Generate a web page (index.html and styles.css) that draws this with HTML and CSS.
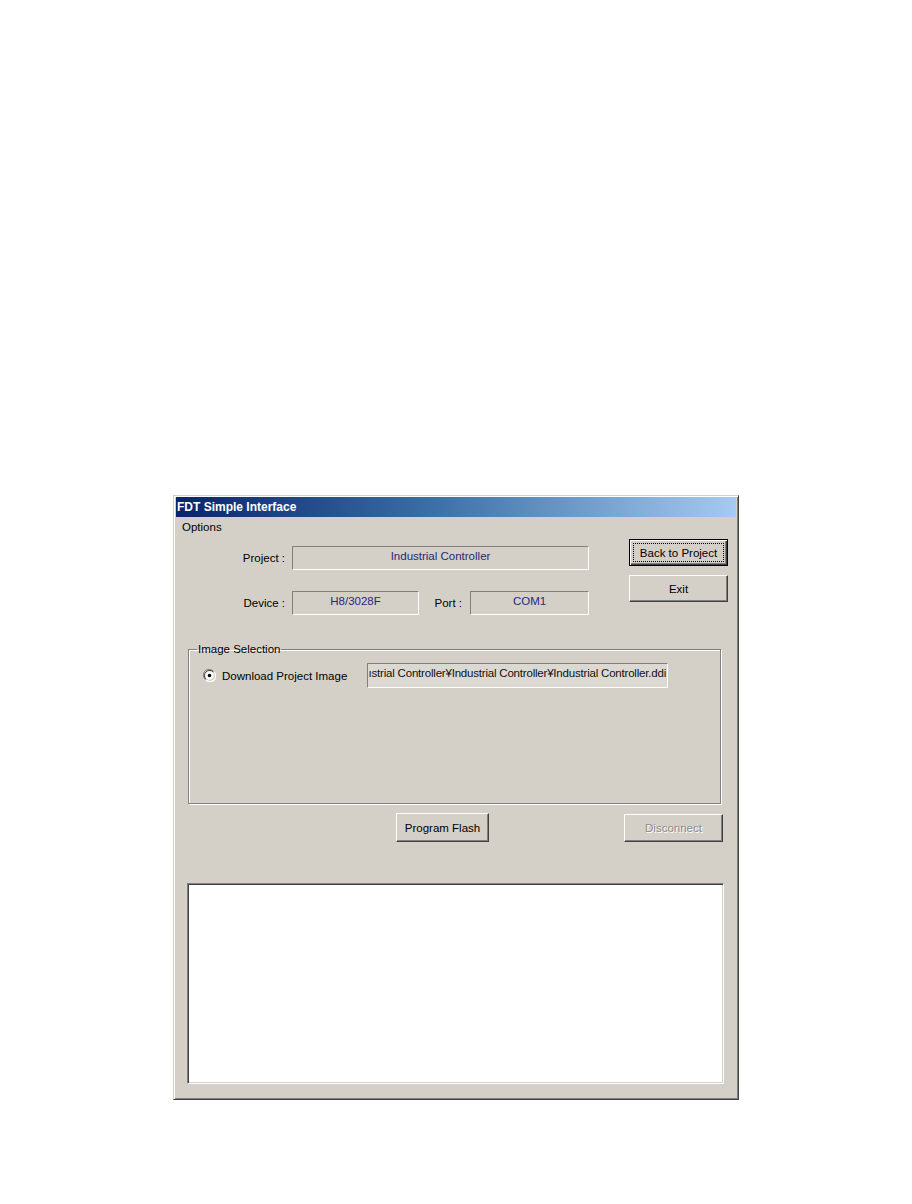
FILE: index.html
```html
<!DOCTYPE html>
<html>
<head>
<meta charset="utf-8">
<title>FDT Simple Interface</title>
<link rel="stylesheet" href="styles.css">
</head>
<body>
<div class="page">
  <div class="window">
    <div class="titlebar">FDT Simple Interface</div>
    <div class="menubar"><span class="menu-item">Options</span></div>
    <div class="client">
      <div class="top">
        <div class="form">
          <div class="label">Project :</div>
          <div class="field wide">Industrial Controller</div>
          <div class="label">Device :</div>
          <div class="field">H8/3028F</div>
          <div class="label port-label">Port :</div>
          <div class="field">COM1</div>
        </div>
        <div class="buttons">
          <button class="btn default"><span class="focus">Back to Project</span></button>
          <button class="btn">Exit</button>
        </div>
      </div>

      <fieldset class="group">
        <legend>Image Selection</legend>
        <div class="group-body">
          <div class="radio-row">
            <svg class="radio" width="13" height="13" viewBox="0 0 13 13">
              <path d="M2 10 A5.5 5.5 0 0 1 10 2" fill="none" stroke="#808080" stroke-width="1"/>
              <path d="M3 10.5 A4.8 4.8 0 0 1 10.5 3" fill="none" stroke="#404040" stroke-width="1"/>
              <path d="M11 3 A5.5 5.5 0 0 1 3 11" fill="none" stroke="#ffffff" stroke-width="1.2"/>
              <circle cx="6.5" cy="6.5" r="4.2" fill="#ffffff"/>
              <circle cx="6.5" cy="6.5" r="1.8" fill="#000000"/>
            </svg>
            <span class="radio-label">Download Project Image</span>
            <div class="path"><span>ıstrial Controller¥Industrial Controller¥Industrial Controller.ddi</span></div>
          </div>
        </div>
      </fieldset>

      <div class="actions">
        <button class="btn flash">Program Flash</button>
        <button class="btn disabled" disabled>Disconnect</button>
      </div>

      <div class="log"></div>
    </div>
  </div>
</div>
</body>
</html>
```
FILE: styles.css
```css
html, body {
  margin: 0;
  padding: 0;
  background: #ffffff;
}

.page {
  padding: 495px 0 0 173px;
}

.window {
  box-sizing: border-box;
  width: 566px;
  height: 605px;
  background: #d4d0c8;
  border: 1px solid;
  border-color: #d4d0c8 #404040 #404040 #d4d0c8;
  box-shadow: inset 1px 1px #ffffff, inset -1px -1px #808080;
  padding: 1px 2px 2px 2px;
  font-family: "Liberation Sans", Arial, sans-serif;
  font-size: 11.5px;
  color: #000;
  display: flex;
  flex-direction: column;
}

.titlebar {
  height: 20px;
  line-height: 20px;
  padding-left: 1px;
  background: linear-gradient(to right, #0a246a 0%, #3a6ea5 45%, #a6caf0 100%);
  color: #ffffff;
  font-weight: bold;
  font-size: 12px;
}

.menubar {
  height: 20px;
  line-height: 20px;
  padding-left: 6px;
}

.client {
  flex: 1;
  display: flex;
  flex-direction: column;
}

.top {
  display: flex;
  height: 82px;
}

.form {
  margin-left: 11px;
  padding-top: 9px;
  display: grid;
  grid-template-columns: 105px 127px 51px 119px;
  grid-auto-rows: 24px;
  row-gap: 21px;
  align-items: center;
}

.label {
  text-align: right;
  padding-right: 7px;
  line-height: 14px;
}

.port-label {
  padding-right: 8px;
}

.field {
  box-sizing: border-box;
  height: 24px;
  border: 1px solid;
  border-color: #808080 #ffffff #ffffff #808080;
  text-align: center;
  color: #27277a;
  line-height: 16px;
  padding-top: 1px;
}

.field.wide {
  grid-column: 2 / 5;
}

.buttons {
  margin-left: auto;
  margin-right: 8px;
  padding-top: 2px;
  display: flex;
  flex-direction: column;
  gap: 9px;
}

.btn {
  box-sizing: border-box;
  width: 99px;
  height: 27px;
  padding: 0;
  margin: 0;
  background: #d4d0c8;
  font-family: "Liberation Sans", Arial, sans-serif;
  font-size: 11.5px;
  color: #000;
  border: 1px solid;
  border-color: #ffffff #404040 #404040 #ffffff;
  box-shadow: inset -1px -1px #808080;
  display: flex;
  align-items: center;
  justify-content: center;
}

.btn.default {
  border: 1px solid #000000;
  box-shadow: inset 1px 1px #ffffff, inset -1px -1px #404040, inset -2px -2px #808080;
}

.focus {
  box-sizing: border-box;
  display: flex;
  align-items: center;
  justify-content: center;
  width: 91px;
  height: 19px;
  border: 1px dotted #000;
}

.group {
  box-sizing: border-box;
  margin: 23px 0 0 12px;
  width: 533px;
  padding: 0;
  border: 1px solid #808080;
  box-shadow: inset 1px 1px #ffffff, 1px 1px #ffffff;
  min-inline-size: 0;
}

.group legend {
  margin-left: 8px;
  padding: 0 1px;
  line-height: 14px;
}

.group-body {
  height: 147px;
  padding-top: 7px;
  box-sizing: border-box;
}

.radio-row {
  display: flex;
  align-items: center;
  padding-left: 14px;
}

.radio {
  display: block;
  flex: none;
}

.radio-label {
  margin-left: 6px;
  width: 145px;
  flex: none;
}

.path {
  box-sizing: border-box;
  width: 301px;
  height: 25px;
  border: 1px solid;
  border-color: #808080 #ffffff #ffffff #808080;
  background: #dcd9d3;
  display: flex;
  justify-content: flex-end;
  align-items: flex-start;
  overflow: hidden;
  white-space: nowrap;
  line-height: 16px;
  padding-top: 1px;
  padding-right: 1px;
  color: #111;
  letter-spacing: -0.2px;
  font-size: 11.5px;
}

.actions {
  display: flex;
  margin-top: 9px;
  align-items: flex-start;
}

.btn.flash {
  width: 93px;
  height: 29px;
  margin-left: 220px;
}

.btn.disabled {
  margin-left: auto;
  margin-right: 13px;
  height: 28px;
  margin-top: 1px;
  color: #8c8c8c;
  text-shadow: 1px 1px #ffffff;
}

.log {
  box-sizing: border-box;
  margin: 41px 12px 0 11px;
  height: 201px;
  background: #ffffff;
  border: 1px solid;
  border-color: #808080 #ffffff #ffffff #808080;
  box-shadow: inset 1px 1px #404040, inset -1px -1px #d4d0c8;
}
```
